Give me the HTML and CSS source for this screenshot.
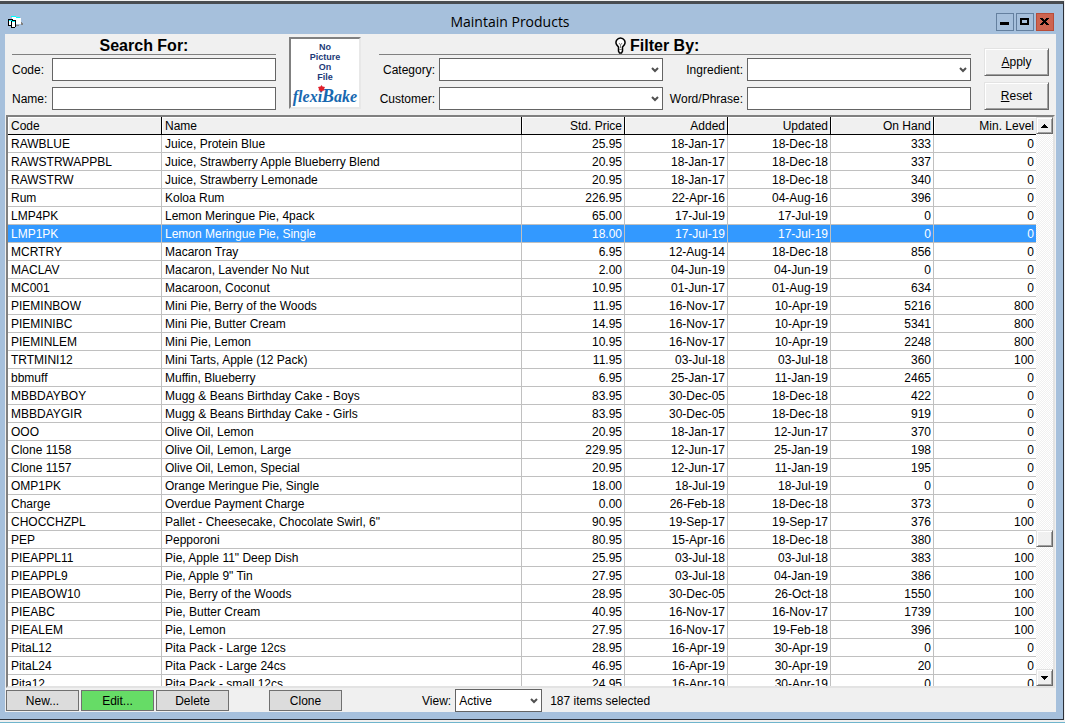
FILE: index.html
```html
<!DOCTYPE html>
<html lang="en">
<head>
    <meta charset="UTF-8">
    <meta name="viewport" content="width=device-width, initial-scale=1.0">
    <title>Maintain Products</title>
    <link rel="stylesheet" href="styles.css">
</head>
<body>

<div class="window">
    <header class="titlebar">
        <svg class="app-icon" width="16" height="12" viewBox="0 0 16 12" shape-rendering="crispEdges">
            <path d="M4 1h8v1h1v6H5z" fill="#fff"/>
            <path d="M3 0h5v1H3zM8 1h4v1H8z" fill="#0ff"/>
            <path d="M13 6h1v1h1v2h-2zM8 9h3v1H8z" fill="#808080"/>
            <path d="M0 3h5v1h3v7H7v1H3v-2H0z" fill="#000"/>
            <path d="M1 5h2v4H1zM4 6h3v5H4z" fill="#fff"/>
            <path d="M1 4h3v1H1zM4 5h3v1H4z" fill="#0ff"/>
        </svg>
        <h1>Maintain Products</h1>
        <div class="window-buttons">
            <button type="button" aria-label="Minimize">
                <svg width="16" height="16" viewBox="0 0 16 16" shape-rendering="crispEdges"><path d="M3 8h9v3H3z"/></svg>
            </button>
            <button type="button" aria-label="Maximize">
                <svg width="16" height="16" viewBox="0 0 16 16" shape-rendering="crispEdges"><path d="M3 4h9v7H3zM5 6v3h5V6z" fill-rule="evenodd"/></svg>
            </button>
            <button type="button" class="close" aria-label="Close">
                <svg width="16" height="16" viewBox="0 0 16 16" shape-rendering="crispEdges"><path d="M3 4h3v1h1v1h1V5h1V4h3v1h-1v1h-1v1H9v1h1v1h1v1h1v1H9v-1H8V9H7v1H6v1H3v-1h1V9h1V8h1V7H5V6H4V5H3z"/></svg>
            </button>
        </div>
    </header>

    <main class="client">
        <form class="criteria">
            <section class="search">
                <h2>Search For:</h2>
                <div class="fields">
                    <label for="code">Code:</label>
                    <input type="text" id="code">
                    <label for="name">Name:</label>
                    <input type="text" id="name">
                </div>
            </section>

            <div class="picture">
                <p>No<br>Picture<br>On<br>File</p>
                <div class="logo">flexi<span class="big">B</span>ake<svg width="7" height="7" viewBox="0 0 7 7"><path d="M3.500 0l1 1.500L7 2l-1 2 .5 1.500-2 .3L3.500 7l-1-1.200-2-.3L1 4 0 2l2.500-.5z" fill="#e0202c"/></svg></div>
            </div>

            <section class="filter">
                <h2>
                    <svg width="11" height="17" viewBox="0 0 11 17"><path d="M3.500 11.500v-1.500L1.500 7.500a4.500 4.500 0 1 1 8 0L7.500 10v4l-1 2h-2l-1-2z" fill="#fff" stroke="#000" stroke-width="1.500"/><path d="M4 6l1.500 2L7 6M5.500 8v3M4 12.500h3" fill="none" stroke="#808080"/></svg>
                    Filter By:
                </h2>
                <div class="fields">
                    <label for="category">Category:</label>
                    <span class="combo">
                        <select id="category"><option></option></select>
                        <svg width="8" height="7" viewBox="0 0 8 7"><path d="M1 1l3 3 3-3" /></svg>
                    </span>
                    <label for="ingredient">Ingredient:</label>
                    <span class="combo">
                        <select id="ingredient"><option></option></select>
                        <svg width="8" height="7" viewBox="0 0 8 7"><path d="M1 1l3 3 3-3" /></svg>
                    </span>
                    <label for="customer">Customer:</label>
                    <span class="combo">
                        <select id="customer"><option></option></select>
                        <svg width="8" height="7" viewBox="0 0 8 7"><path d="M1 1l3 3 3-3" /></svg>
                    </span>
                    <label for="phrase">Word/Phrase:</label>
                    <input type="text" id="phrase">
                </div>
            </section>

            <div class="form-buttons">
                <button type="button"><u>A</u>pply</button>
                <button type="button"><u>R</u>eset</button>
            </div>
        </form>

        <div class="grid">
            <div class="grid-body">
                <table>
                    <colgroup>
                        <col class="col-code">
                        <col>
                        <col class="col-num">
                        <col class="col-num">
                        <col class="col-num">
                        <col class="col-num">
                        <col class="col-level">
                    </colgroup>
                    <thead>
                        <tr>
                            <th>Code</th>
                            <th>Name</th>
                            <th>Std. Price</th>
                            <th>Added</th>
                            <th>Updated</th>
                            <th>On Hand</th>
                            <th>Min. Level</th>
                        </tr>
                    </thead>
                    <tbody id="products"></tbody>
                </table>
            </div>
            <div class="scrollbar">
                <button type="button" aria-label="Scroll up"><svg width="7" height="4" viewBox="0 0 7 4" shape-rendering="crispEdges"><path d="M3 0h1v1h1v1h1v1h1v1H0V3h1V2h1V1h1z"/></svg></button>
                <div class="track"><div class="thumb"></div></div>
                <button type="button" aria-label="Scroll down"><svg width="7" height="4" viewBox="0 0 7 4" shape-rendering="crispEdges"><path d="M0 0h7v1H6v1H5v1H4v1H3V3H2V2H1V1H0z"/></svg></button>
            </div>
        </div>

        <footer class="toolbar">
            <button type="button">New...</button>
            <button type="button" class="edit">Edit...</button>
            <button type="button">Delete</button>
            <button type="button" class="clone">Clone</button>
            <label for="view">View:</label>
            <span class="combo">
                <select id="view"><option>Active</option></select>
                <svg width="8" height="7" viewBox="0 0 8 7"><path d="M1 1l3 3 3-3" /></svg>
            </span>
            <span class="count">187 items selected</span>
        </footer>
    </main>
</div>

<script>
    // code, name, price, added, updated, on hand, min level
    const products = [
        ['RAWBLUE', 'Juice, Protein Blue', '25.95', '18-Jan-17', '18-Dec-18', 333, 0],
        ['RAWSTRWAPPBL', 'Juice, Strawberry Apple Blueberry Blend', '20.95', '18-Jan-17', '18-Dec-18', 337, 0],
        ['RAWSTRW', 'Juice, Strawberry Lemonade', '20.95', '18-Jan-17', '18-Dec-18', 340, 0],
        ['Rum', 'Koloa Rum', '226.95', '22-Apr-16', '04-Aug-16', 396, 0],
        ['LMP4PK', 'Lemon Meringue Pie, 4pack', '65.00', '17-Jul-19', '17-Jul-19', 0, 0],
        ['LMP1PK', 'Lemon Meringue Pie, Single', '18.00', '17-Jul-19', '17-Jul-19', 0, 0],
        ['MCRTRY', 'Macaron Tray', '6.95', '12-Aug-14', '18-Dec-18', 856, 0],
        ['MACLAV', 'Macaron, Lavender No Nut', '2.00', '04-Jun-19', '04-Jun-19', 0, 0],
        ['MC001', 'Macaroon, Coconut', '10.95', '01-Jun-17', '01-Aug-19', 634, 0],
        ['PIEMINBOW', 'Mini Pie, Berry of the Woods', '11.95', '16-Nov-17', '10-Apr-19', 5216, 800],
        ['PIEMINIBC', 'Mini Pie, Butter Cream', '14.95', '16-Nov-17', '10-Apr-19', 5341, 800],
        ['PIEMINLEM', 'Mini Pie, Lemon', '10.95', '16-Nov-17', '10-Apr-19', 2248, 800],
        ['TRTMINI12', 'Mini Tarts, Apple (12 Pack)', '11.95', '03-Jul-18', '03-Jul-18', 360, 100],
        ['bbmuff', 'Muffin, Blueberry', '6.95', '25-Jan-17', '11-Jan-19', 2465, 0],
        ['MBBDAYBOY', 'Mugg & Beans Birthday Cake - Boys', '83.95', '30-Dec-05', '18-Dec-18', 422, 0],
        ['MBBDAYGIR', 'Mugg & Beans Birthday Cake - Girls', '83.95', '30-Dec-05', '18-Dec-18', 919, 0],
        ['OOO', 'Olive Oil, Lemon', '20.95', '18-Jan-17', '12-Jun-17', 370, 0],
        ['Clone 1158', 'Olive Oil, Lemon, Large', '229.95', '12-Jun-17', '25-Jan-19', 198, 0],
        ['Clone 1157', 'Olive Oil, Lemon, Special', '20.95', '12-Jun-17', '11-Jan-19', 195, 0],
        ['OMP1PK', 'Orange Meringue Pie, Single', '18.00', '18-Jul-19', '18-Jul-19', 0, 0],
        ['Charge', 'Overdue Payment Charge', '0.00', '26-Feb-18', '18-Dec-18', 373, 0],
        ['CHOCCHZPL', 'Pallet - Cheesecake, Chocolate Swirl, 6"', '90.95', '19-Sep-17', '19-Sep-17', 376, 100],
        ['PEP', 'Pepporoni', '80.95', '15-Apr-16', '18-Dec-18', 380, 0],
        ['PIEAPPL11', 'Pie, Apple 11" Deep Dish', '25.95', '03-Jul-18', '03-Jul-18', 383, 100],
        ['PIEAPPL9', 'Pie, Apple 9" Tin', '27.95', '03-Jul-18', '04-Jan-19', 386, 100],
        ['PIEABOW10', 'Pie, Berry of the Woods', '28.95', '30-Dec-05', '26-Oct-18', 1550, 100],
        ['PIEABC', 'Pie, Butter Cream', '40.95', '16-Nov-17', '16-Nov-17', 1739, 100],
        ['PIEALEM', 'Pie, Lemon', '27.95', '16-Nov-17', '19-Feb-18', 396, 100],
        ['PitaL12', 'Pita Pack - Large 12cs', '28.95', '16-Apr-19', '30-Apr-19', 0, 0],
        ['PitaL24', 'Pita Pack - Large 24cs', '46.95', '16-Apr-19', '30-Apr-19', 20, 0],
        ['Pita12', 'Pita Pack - small 12cs', '24.95', '16-Apr-19', '30-Apr-19', 0, 0]
    ];
    const selectedCode = 'LMP1PK';

    const body = document.getElementById('products');
    products.forEach(product => {
        const row = body.insertRow();
        if (product[0] === selectedCode) {
            row.classList.add('selected');
        }
        product.forEach(value => {
            row.insertCell().textContent = value;
        });
    });
</script>

</body>
</html>
```
FILE: styles.css
```css
* {
    box-sizing: border-box;
}

body {
    margin: 0;
    height: 100vh;
    padding: 1px 1px 2px 0;
    background-color: #f0f0f0;
    border-bottom: 1px solid #6fb4cc;
    font-family: "Liberation Sans", Arial, sans-serif;
    font-size: 12px;
    color: #000;
}

button, input, select {
    font: inherit;
    color: inherit;
    margin: 0;
    border-radius: 0;
}

.window {
    height: 100%;
    display: flex;
    flex-direction: column;
    padding: 0 7px 7px 5px;
    background-color: #a6c0dc;
    border-top: 3px solid #484c50;
    border-right: 1px solid #2b2f38;
    border-bottom: 1px solid #2b2f38;
}

.titlebar {
    display: flex;
    align-items: center;
    height: 30px;
    flex: none;
    padding: 6px 2px 0 3px;
}

.titlebar h1 {
    flex: 1;
    margin: 0;
    font-family: "Open Sans", "Noto Sans", sans-serif;
    font-size: 14px;
    font-weight: normal;
    line-height: 18px;
    text-align: center;
}

.window-buttons {
    display: flex;
    gap: 2px;
}

.window-buttons button {
    width: 18px;
    height: 18px;
    padding: 0;
    background: none;
    border: 1px solid #64809f;
}

.window-buttons .close {
    background-color: #cd6450;
    border-color: #b84c38;
}

.window-buttons svg {
    display: block;
}

.client {
    flex: 1;
    min-height: 0;
    display: flex;
    flex-direction: column;
    background-color: #f0f0f0;
}

/* search and filter panel */
.criteria {
    display: flex;
    gap: 13px;
    padding: 0 7px 5px;
}

.search {
    flex: 264;
}

.filter {
    flex: 597;
}

.criteria h2 {
    height: 21px;
    margin: 0 0 3px;
    border-bottom: 1px solid #808080;
    font-size: 16px;
    line-height: 23px;
    text-align: center;
}

.filter h2 {
    margin-left: 5px;
    padding-right: 36px;
}

.filter h2 svg {
    vertical-align: -3px;
}

.fields {
    display: grid;
    grid-template-columns: 40px 1fr;
    row-gap: 6px;
    align-items: center;
}

.filter .fields {
    grid-template-columns: 65px 1fr 84px 1fr;
}

.filter label {
    text-align: right;
    padding-right: 4px;
}

.criteria input, .combo {
    width: 100%;
    height: 23px;
}

.criteria input, .combo select {
    background-color: #fff;
    border: 1px solid #646464;
    padding: 0 3px;
}

.combo {
    position: relative;
}

.combo select {
    display: block;
    width: 100%;
    height: 100%;
    appearance: none;
}

.combo svg {
    position: absolute;
    right: 4px;
    top: 9px;
    fill: none;
    stroke: #505050;
    stroke-width: 2;
    pointer-events: none;
}

.picture {
    width: 72px;
    height: 72px;
    margin-top: 3px;
    background-color: #fff;
    border: 2px solid;
    border-color: #808080 #e8e8e8 #e8e8e8 #808080;
    text-align: center;
    color: #1c3a78;
}

.picture p {
    margin: 3px 0 0;
    font-size: 9px;
    font-weight: bold;
    line-height: 10px;
}

.logo {
    position: relative;
    margin-top: 3px;
    font-family: "Liberation Serif", serif;
    font-style: italic;
    font-weight: bold;
    font-size: 16px;
    line-height: 22px;
    white-space: nowrap;
    color: #1868b0;
}

.logo .big {
    font-size: 18px;
}

.logo svg {
    position: absolute;
    left: 27px;
    top: 0;
}

.form-buttons {
    width: 65px;
    padding-top: 14px;
    display: flex;
    flex-direction: column;
    gap: 6px;
}

.form-buttons button, .scrollbar button, .thumb {
    background-color: #f0f0f0;
    border: 1px solid;
    border-color: #e3e3e3 #696969 #696969 #e3e3e3;
    box-shadow: inset 1px 1px #fff, inset -1px -1px #a0a0a0;
}

.form-buttons button {
    height: 28px;
    padding: 0;
}

/* product list */
.grid {
    flex: 1;
    min-height: 0;
    display: flex;
    margin: 0 1px;
    border: 2px solid;
    border-color: #808080 #e3e3e3 #e3e3e3 #808080;
    background-color: #fff;
}

.grid-body {
    flex: 1;
    overflow: hidden;
}

table {
    width: 100%;
    table-layout: fixed;
    border-collapse: separate;
    border-spacing: 0;
}

.col-code {
    width: 154px;
}

.col-num {
    width: 103px;
}

.col-level {
    width: 102px;
}

th, td {
    height: 18px;
    padding: 1px 2px 0 3px;
    line-height: 16px;
    font-weight: normal;
    text-align: right;
    white-space: nowrap;
    border-right: 1px solid #c0c0c0;
    border-bottom: 1px solid #c0c0c0;
}

th {
    background-color: #f0f0f0;
    border-color: #000;
    box-shadow: inset 1px 1px #fff;
}

th:nth-child(-n+2), td:nth-child(-n+2) {
    text-align: left;
}

th:last-child, td:last-child {
    border-right: none;
}

.selected td {
    background-color: #3399ff;
    color: #fff;
}

.scrollbar {
    width: 17px;
    display: flex;
    flex-direction: column;
}

.scrollbar button {
    height: 17px;
    padding: 0;
    display: flex;
    align-items: center;
    justify-content: center;
}

.track {
    flex: 1;
    display: flex;
    flex-direction: column;
    background: repeating-conic-gradient(#f0f0f0 0 25%, #fff 0 50%) 0 0 / 2px 2px;
}

.track::before {
    content: "";
    flex: 396;
}

.track::after {
    content: "";
    flex: 122;
}

.thumb {
    height: 17px;
}

/* bottom bar */
.toolbar {
    display: flex;
    align-items: center;
    gap: 2px;
    padding: 1px 1px 0;
}

.toolbar button {
    width: 73px;
    height: 21px;
    padding: 0;
    background-color: #dcdcdc;
    border: 1px solid #707070;
}

.toolbar .edit {
    background-color: #66dc66;
}

.toolbar .clone {
    margin-left: 38px;
}

.toolbar label {
    margin-left: 78px;
    padding-right: 2px;
}

.toolbar .combo {
    width: 87px;
}

.count {
    margin-left: 6px;
}
```
